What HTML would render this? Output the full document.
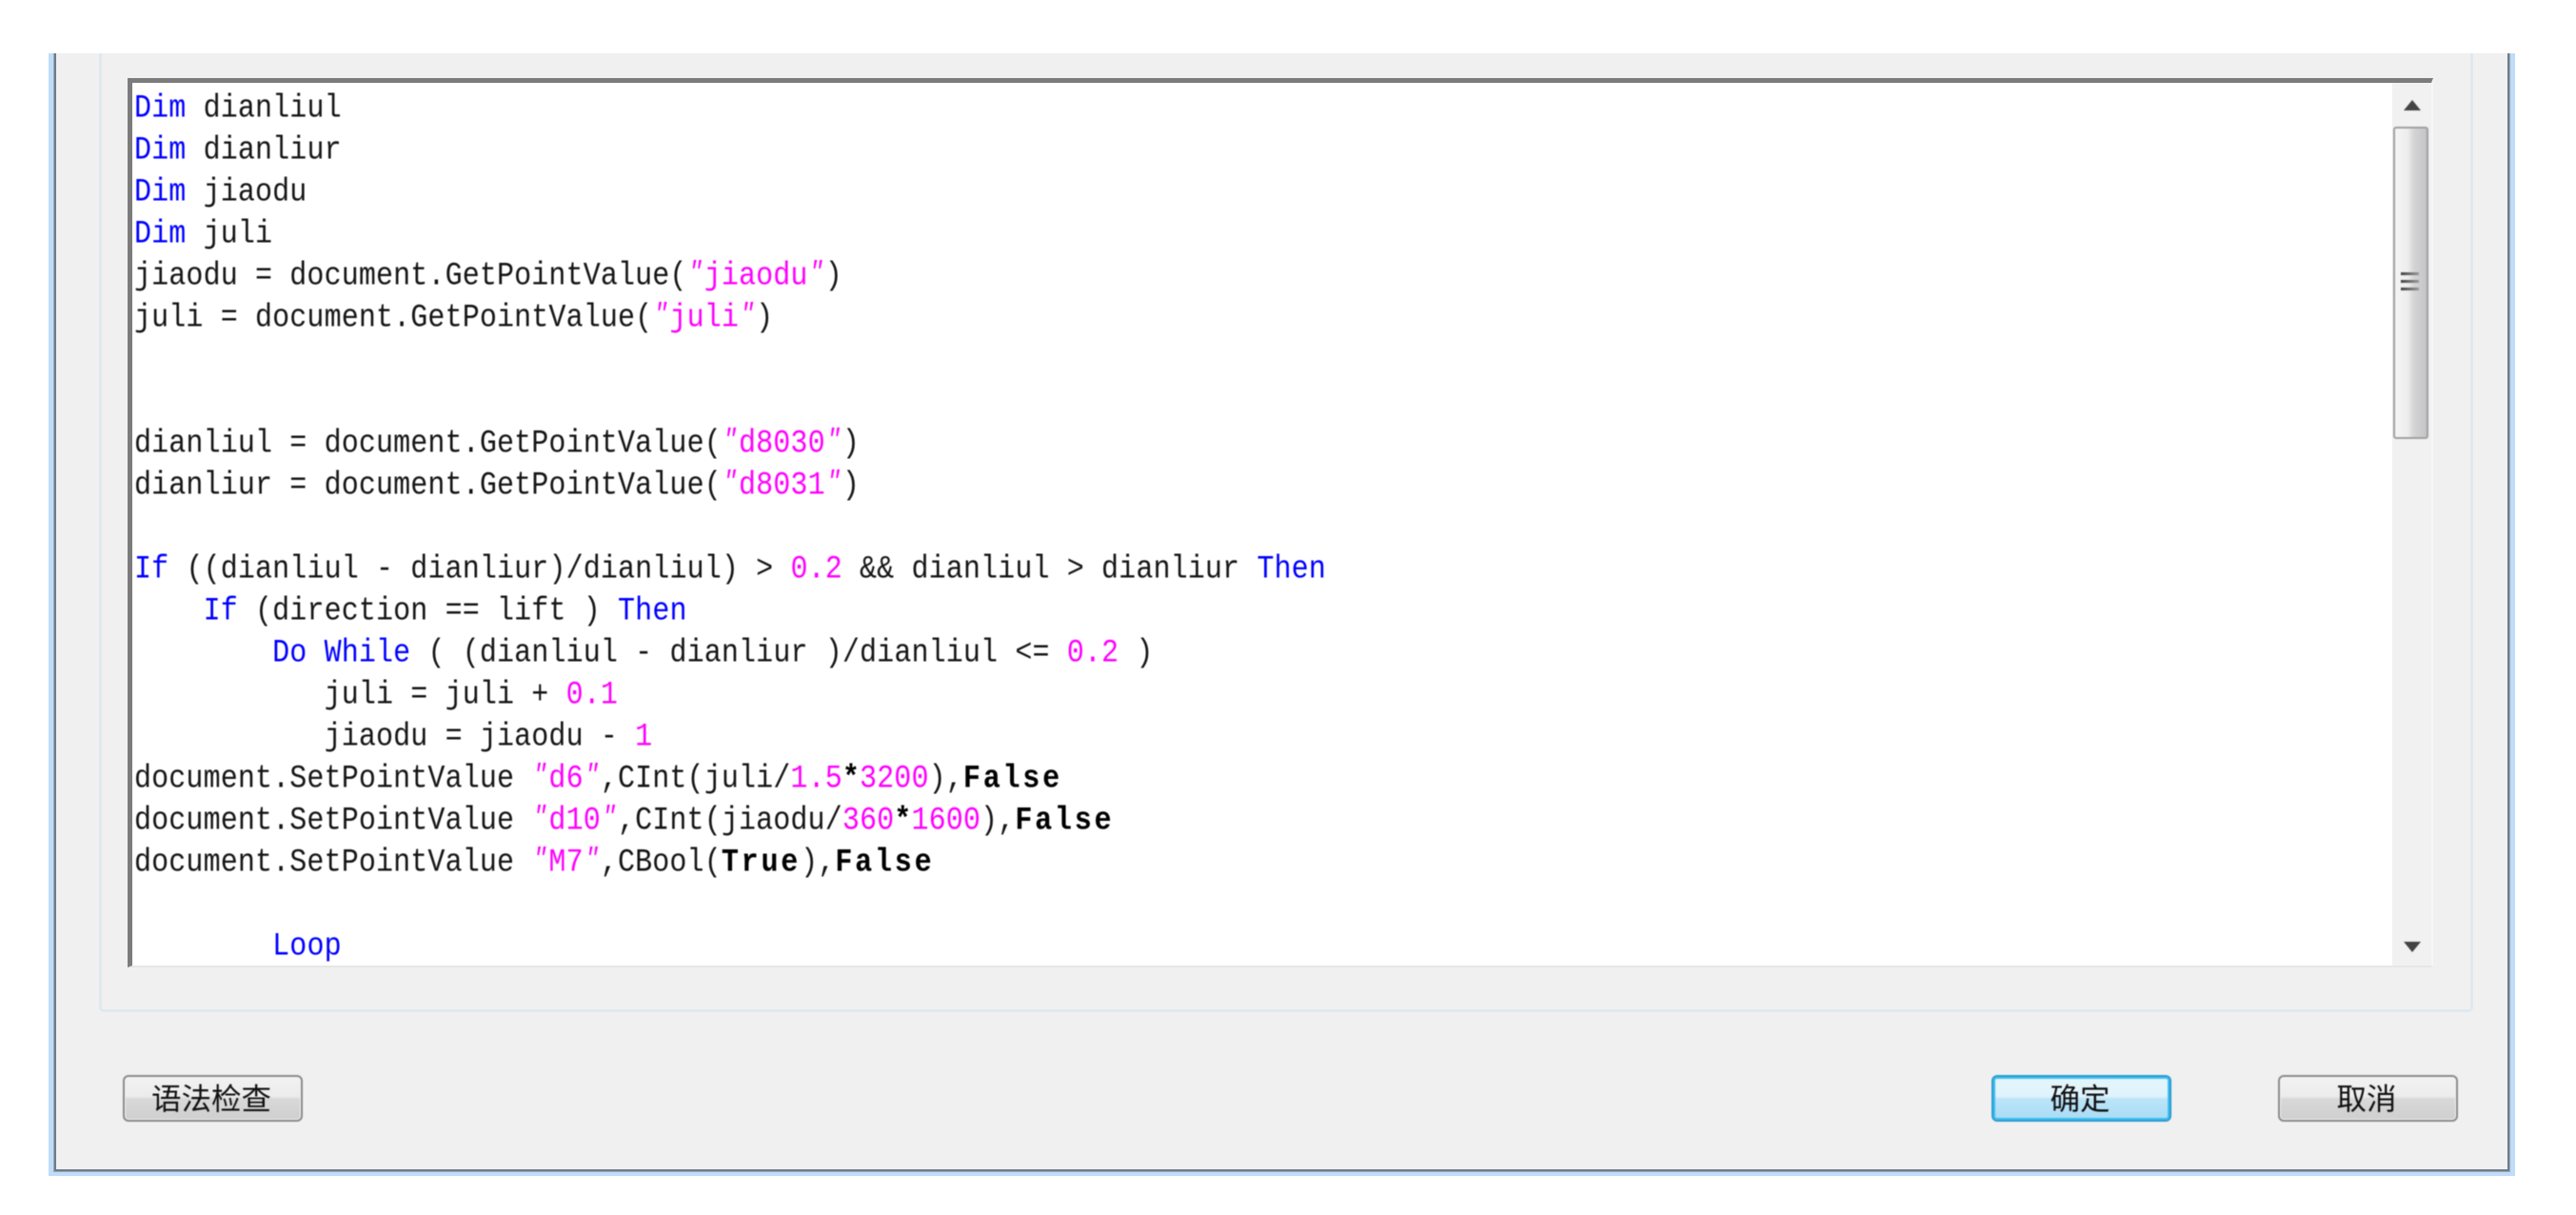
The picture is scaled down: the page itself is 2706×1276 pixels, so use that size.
<!DOCTYPE html>
<html lang="zh">
<head>
<meta charset="utf-8">
<style>
html,body{margin:0;padding:0;background:#fff;width:2706px;height:1276px;overflow:hidden}
.a{position:absolute}
#win{left:51px;top:56px;height:1179px;width:2591px;background:#bfdcf8}
#inner{left:56px;top:56px;width:2581px;height:1175px;background:#f0f0f0;box-shadow:inset 1px 0 0 #9aa8b6,inset -1px 0 0 #9aa8b6,inset 0 -1px 0 #9aa8b6,inset 3px 0 0 #6f7c8a,inset -3px 0 0 #6f7c8a,inset 0 -3px 0 #6f7c8a}
#group{left:104px;top:56px;width:2494px;height:1007px;box-sizing:border-box;border:solid #e0e8ef;border-width:0 3px 3px 3px;border-radius:0 0 5px 5px}
#edit{left:134px;top:82px;width:2422px;height:934px;background:#fff;box-sizing:border-box;border-top:5px solid #7c7c7c;border-left:5px solid #7c7c7c;border-bottom:2px solid #e6e6e6;border-right:2px solid #f6f6f6}
#sb{left:2513px;top:87px;width:41px;height:927px;background:#f1f1f1}
#thumb{left:2514px;top:133px;width:37px;height:328px;box-sizing:border-box;border:2px solid #a0a0a0;border-radius:3px;background:linear-gradient(90deg,#f5f5f5 0%,#ededed 40%,#d4d4d6 60%,#c4c4c8 100%);filter:blur(.4px)}
.g{position:absolute;left:2522px;width:19px;height:3px;background:linear-gradient(90deg,#444,#999);filter:blur(.5px)}
#code{left:141px;top:5px;font:30px/44px "Liberation Mono",monospace;letter-spacing:.14px;color:#151515;filter:blur(.6px)}
.l{position:absolute;left:0;white-space:pre;transform:scaleY(1.14);transform-origin:0 33px;height:44px}
.k{color:#0000ff}
.m{color:#ff00ff}
.q{display:inline-block;width:18.14px;font-size:25px;line-height:1;font-style:italic;vertical-align:4px;text-align:center}
b{font-family:"Liberation Mono",monospace;font-weight:bold;letter-spacing:2.8px;color:#000}
b.s{letter-spacing:.14px}
.btn{position:absolute;top:1129px;height:49px;box-sizing:border-box;border:2px solid #8a8a8a;border-radius:6px;padding-right:3px;background:linear-gradient(#f2f2f2 0%,#ececec 45%,#d8d8d8 52%,#cfcfcf 100%);box-shadow:inset 0 0 0 1px #f4f4f4;font:31.5px/43px "WenQuanYi Zen Hei","Noto Sans CJK SC",sans-serif;color:#111;text-align:center;filter:blur(.4px)}
#ok{border-color:#2a9bd0;background:linear-gradient(#e4f5fd 0%,#e0f3fc 45%,#bce4f8 52%,#a9dcf6 100%);box-shadow:inset 0 0 0 2px #3fc0f0}
</style>
</head>
<body>
<div class="a" id="win"></div>
<div class="a" id="inner"></div>
<div class="a" id="group"></div>
<div class="a" id="edit"></div>
<div class="a" id="sb"></div>
<div class="a" id="thumb"></div>
<div class="g" style="top:286px"></div>
<div class="g" style="top:294px"></div>
<div class="g" style="top:302px"></div>
<svg class="a" style="left:2520px;top:100px;filter:blur(.5px)" width="30" height="20"><path d="M5 16 L14 5 L23 16 Z" fill="#444"/></svg>
<svg class="a" style="left:2520px;top:985px;filter:blur(.5px)" width="30" height="20"><path d="M5 4 L23 4 L14 15 Z" fill="#444"/></svg>
<div class="a" id="code">
<div class="l" style="top:89px"><span class="k">Dim</span> dianliul</div>
<div class="l" style="top:133px"><span class="k">Dim</span> dianliur</div>
<div class="l" style="top:177px"><span class="k">Dim</span> jiaodu</div>
<div class="l" style="top:221px"><span class="k">Dim</span> juli</div>
<div class="l" style="top:265px">jiaodu = document.GetPointValue(<span class="m"><i class="q">"</i>jiaodu<i class="q">"</i></span>)</div>
<div class="l" style="top:309px">juli = document.GetPointValue(<span class="m"><i class="q">"</i>juli<i class="q">"</i></span>)</div>
<div class="l" style="top:441px">dianliul = document.GetPointValue(<span class="m"><i class="q">"</i>d8030<i class="q">"</i></span>)</div>
<div class="l" style="top:485px">dianliur = document.GetPointValue(<span class="m"><i class="q">"</i>d8031<i class="q">"</i></span>)</div>
<div class="l" style="top:573px"><span class="k">If</span> ((dianliul - dianliur)/dianliul) &gt; <span class="m">0.2</span> &amp;&amp; dianliul &gt; dianliur <span class="k">Then</span></div>
<div class="l" style="top:617px">    <span class="k">If</span> (direction == lift ) <span class="k">Then</span></div>
<div class="l" style="top:661px">        <span class="k">Do While</span> ( (dianliul - dianliur )/dianliul &lt;= <span class="m">0.2</span> )</div>
<div class="l" style="top:705px">           juli = juli + <span class="m">0.1</span></div>
<div class="l" style="top:749px">           jiaodu = jiaodu - <span class="m">1</span></div>
<div class="l" style="top:793px">document.SetPointValue <span class="m"><i class="q">"</i>d6<i class="q">"</i></span>,CInt(juli/<span class="m">1.5</span><b class="s">*</b><span class="m">3200</span>),<b>False</b></div>
<div class="l" style="top:837px">document.SetPointValue <span class="m"><i class="q">"</i>d10<i class="q">"</i></span>,CInt(jiaodu/<span class="m">360</span><b class="s">*</b><span class="m">1600</span>),<b>False</b></div>
<div class="l" style="top:881px">document.SetPointValue <span class="m"><i class="q">"</i>M7<i class="q">"</i></span>,CBool(<b>True</b>),<b>False</b></div>
<div class="l" style="top:969px">        <span class="k">Loop</span></div>
</div>
<div class="btn" style="left:129px;width:189px">语法检查</div>
<div class="btn" id="ok" style="left:2092px;width:189px">确定</div>
<div class="btn" style="left:2393px;width:189px">取消</div>
</body>
</html>
